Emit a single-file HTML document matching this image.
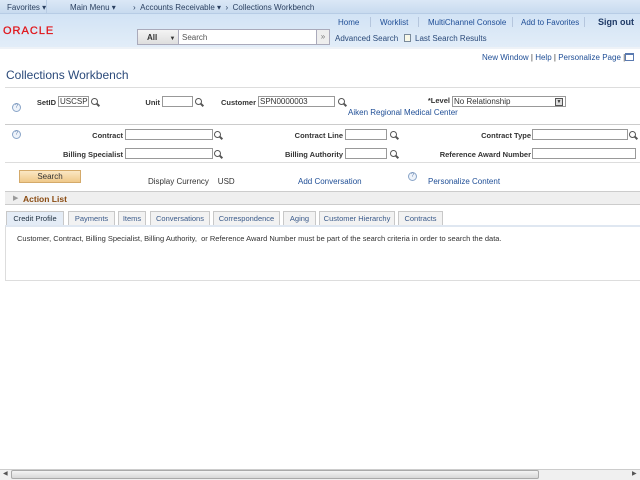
<!DOCTYPE html>
<html><head><meta charset="utf-8"><style>
*{margin:0;padding:0;box-sizing:border-box}
body{width:640px;height:480px;overflow:hidden;background:#fff;font-family:"Liberation Sans",Arial,sans-serif;font-size:8px;color:#333;position:relative}
.a{position:absolute;white-space:nowrap}
.lnk{color:#1f4e96}
.lbl{position:absolute;white-space:nowrap;font-weight:bold;color:#333;font-size:7.5px;text-align:right}
.inp{position:absolute;height:11px;border:1px solid #999;background:#fff;font-size:8px;line-height:9px;padding-left:1px}
.mg{position:absolute;width:7px;height:7px;border:1.3px solid #555;border-radius:50%}
.mg:after{content:"";position:absolute;width:1.5px;height:4px;background:#555;left:5px;top:4px;transform:rotate(-45deg)}
.q{position:absolute;width:9px;height:9px;border-radius:50%;border:1px solid #8aa5c8;background:#eef3fa;color:#6a86b0;font-size:6px;text-align:center;line-height:7px}
.tab{position:absolute;top:211px;height:14px;border:1px solid #c8c8c8;border-bottom:none;background:#f2f2f2;color:#3a5a8a;text-align:center;line-height:13px;font-size:7.5px}
</style></head><body>
<div class="a" style="left:0;top:0;width:640px;height:14px;background:linear-gradient(#dbe8f6,#c8dbef);border-bottom:1px solid #b7cce5"></div>
<div class="a" style="left:7px;top:3px;color:#2a3f5f">Favorites ▾</div>
<div class="a" style="left:46px;top:0;width:1px;height:14px;background:#b8cce4"></div>
<div class="a" style="left:70px;top:3px;color:#2a3f5f">Main Menu ▾</div>
<div class="a" style="left:133px;top:3px;color:#2a3f5f">›&nbsp;&nbsp;Accounts Receivable ▾ &nbsp;› &nbsp;Collections Workbench</div>
<div class="a" style="left:0;top:14px;width:640px;height:35px;background:linear-gradient(#d2e3f5,#e2edf8);border-bottom:2px solid #eef2f7"></div>
<div class="a" style="left:3px;top:25px;color:#e0161b;font-size:11px;letter-spacing:1px;-webkit-text-stroke:0.3px #e0161b">ORACLE</div>
<div class="a lnk" style="left:338px;top:18px">Home</div>
<div class="a" style="left:370px;top:17px;width:1px;height:10px;background:#b5c6dd"></div>
<div class="a lnk" style="left:380px;top:18px">Worklist</div>
<div class="a" style="left:418px;top:17px;width:1px;height:10px;background:#b5c6dd"></div>
<div class="a lnk" style="left:428px;top:18px">MultiChannel Console</div>
<div class="a" style="left:512px;top:17px;width:1px;height:10px;background:#b5c6dd"></div>
<div class="a lnk" style="left:521px;top:18px">Add to Favorites</div>
<div class="a" style="left:584px;top:17px;width:1px;height:10px;background:#b5c6dd"></div>
<div class="a" style="left:598px;top:17px;font-weight:bold;font-size:9px;color:#1f3a66">Sign out</div>
<div class="a" style="left:137px;top:29px;width:193px;height:16px;border:1px solid #aab;background:#fff"></div>
<div class="a" style="left:137px;top:29px;width:42px;height:16px;background:linear-gradient(#f4f4f4,#dedede);border:1px solid #aab;font-weight:bold;padding:3px 0 0 9px">All <span style="margin-left:10px;font-size:6px">▼</span></div>
<div class="a" style="left:182px;top:33px;color:#555">Search</div>
<div class="a" style="left:316px;top:29px;width:14px;height:16px;background:#eee;border:1px solid #aab;text-align:center;color:#777;line-height:13px">»</div>
<div class="a lnk" style="left:335px;top:34px;color:#2a4a7a">Advanced Search</div>
<div class="a" style="left:404px;top:34px;width:7px;height:8px;border:1px solid #7a8a9a;background:#f8f8e8"></div>
<div class="a lnk" style="left:415px;top:34px;color:#2a4a7a">Last Search Results</div>
<div class="a lnk" style="left:482px;top:53px">New Window <span style="color:#333">|</span> Help <span style="color:#333">|</span> Personalize Page <span style="color:#333">|</span></div>
<div class="a" style="left:625px;top:53px;width:9px;height:8px;border:1px solid #5a7ab0;border-top:2px solid #5a7ab0"></div>
<div class="a" style="left:6px;top:68px;font-size:12px;color:#2b4a7a">Collections Workbench</div>
<div class="a" style="left:5px;top:87px;width:635px;height:1px;background:#ddd"></div>
<div class="q" style="left:12px;top:103px">?</div>
<div class="lbl" style="right:584px;top:98px">SetID</div>
<div class="inp" style="left:58px;top:96px;width:31px">USCSP</div><div class="mg" style="left:91px;top:98px"></div>
<div class="lbl" style="right:480px;top:98px">Unit</div>
<div class="inp" style="left:162px;top:96px;width:31px"></div><div class="mg" style="left:195px;top:98px"></div>
<div class="lbl" style="right:384px;top:98px">Customer</div>
<div class="inp" style="left:258px;top:96px;width:77px">SPN0000003</div><div class="mg" style="left:338px;top:98px"></div>
<div class="a lnk" style="left:348px;top:108px">Aiken Regional Medical Center</div>
<div class="lbl" style="right:190px;top:96px">*Level</div>
<div class="inp" style="left:452px;top:96px;width:114px">No Relationship</div>
<div class="a" style="left:555px;top:98px;width:8px;height:8px;border:1px solid #555;background:#ddd;font-size:5px;text-align:center;line-height:6px">▼</div>
<div class="a" style="left:5px;top:124px;width:635px;height:1px;background:#ccc"></div>
<div class="q" style="left:12px;top:130px">?</div>
<div class="lbl" style="right:517px;top:131px">Contract</div>
<div class="inp" style="left:125px;top:129px;width:88px"></div><div class="mg" style="left:214px;top:131px"></div>
<div class="lbl" style="right:297px;top:131px">Contract Line</div>
<div class="inp" style="left:345px;top:129px;width:42px"></div><div class="mg" style="left:390px;top:131px"></div>
<div class="lbl" style="right:109px;top:131px">Contract Type</div>
<div class="inp" style="left:532px;top:129px;width:96px"></div><div class="mg" style="left:629px;top:131px"></div>
<div class="lbl" style="right:517px;top:150px">Billing Specialist</div>
<div class="inp" style="left:125px;top:148px;width:88px"></div><div class="mg" style="left:214px;top:150px"></div>
<div class="lbl" style="right:297px;top:150px">Billing Authority</div>
<div class="inp" style="left:345px;top:148px;width:42px"></div><div class="mg" style="left:390px;top:150px"></div>
<div class="lbl" style="right:109px;top:150px">Reference Award Number</div>
<div class="inp" style="left:532px;top:148px;width:104px"></div>
<div class="a" style="left:5px;top:162px;width:635px;height:1px;background:#ddd"></div>
<div class="a" style="left:19px;top:170px;width:62px;height:13px;background:linear-gradient(#fbe7c4,#f0c98a);border:1px solid #d4aa6a;text-align:center;line-height:11px;color:#333">Search</div>
<div class="a" style="left:148px;top:177px">Display Currency &nbsp;&nbsp;&nbsp;USD</div>
<div class="a lnk" style="left:298px;top:177px">Add Conversation</div>
<div class="q" style="left:408px;top:172px">?</div>
<div class="a lnk" style="left:428px;top:177px">Personalize Content</div>
<div class="a" style="left:5px;top:191px;width:635px;height:14px;background:#efefef;border-top:1px solid #ccc;border-bottom:1px solid #ccc"></div>
<div class="a" style="left:13px;top:194px;color:#999;font-size:7px">▶</div>
<div class="a" style="left:23px;top:194px;font-weight:bold;color:#8a4a10;font-size:8.5px">Action List</div>
<div class="tab" style="left:6px;width:58px;background:#e4ecf6;color:#234">Credit Profile</div>
<div class="tab" style="left:68px;width:47px">Payments</div>
<div class="tab" style="left:118px;width:28px">Items</div>
<div class="tab" style="left:150px;width:60px">Conversations</div>
<div class="tab" style="left:213px;width:67px">Correspondence</div>
<div class="tab" style="left:283px;width:33px">Aging</div>
<div class="tab" style="left:319px;width:76px">Customer Hierarchy</div>
<div class="tab" style="left:398px;width:45px">Contracts</div>
<div class="a" style="left:5px;top:225px;width:635px;height:56px;border:1px solid #ddd;border-top:2px solid #dfe7f1;border-right:none"></div>
<div class="a" style="left:17px;top:234px;font-size:7.5px">Customer, Contract, Billing Specialist, Billing Authority,&nbsp; or Reference Award Number must be part of the search criteria in order to search the data.</div>
<div class="a" style="left:0;top:469px;width:640px;height:11px;background:#f0f0f0;border-top:1px solid #ccc"></div>
<div class="a" style="left:11px;top:470px;width:528px;height:9px;background:linear-gradient(#f4f4f4,#d8d8d8);border:1px solid #aaa;border-radius:2px"></div>
<div class="a" style="left:3px;top:470px;font-size:6px;color:#555">◀</div>
<div class="a" style="left:632px;top:470px;font-size:6px;color:#555">▶</div>
</body></html>
